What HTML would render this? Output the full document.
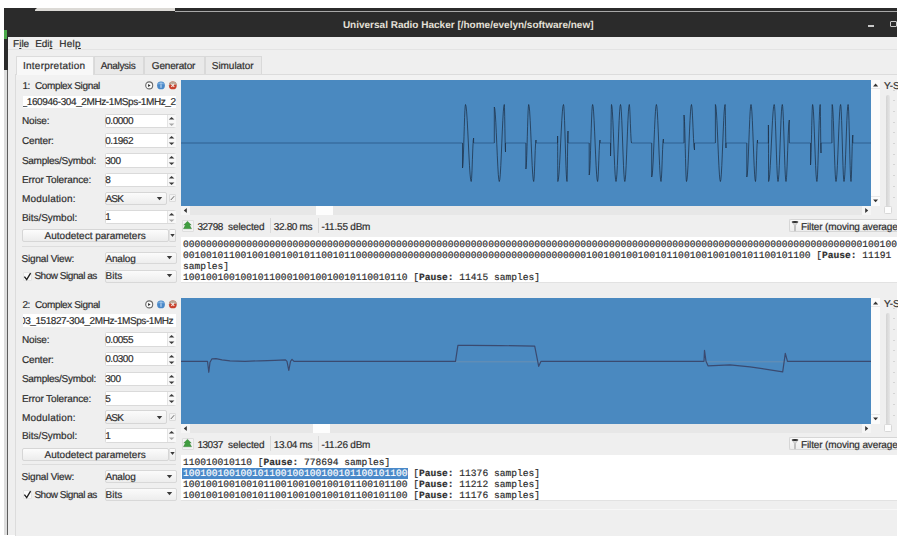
<!DOCTYPE html>
<html><head><meta charset="utf-8"><style>
html,body{margin:0;padding:0;}
body{width:900px;height:538px;overflow:hidden;position:relative;background:#fff;font-family:"Liberation Sans",sans-serif;}
div{position:absolute;}
.t{white-space:nowrap;color:#2e2e2e;line-height:12px;font-size:10px;-webkit-text-stroke:0.2px #2e2e2e;text-rendering:geometricPrecision;}
u{text-decoration:underline;text-underline-offset:1px;text-decoration-thickness:1px;}
svg{overflow:visible}
</style></head><body>
<div style="left:4px;top:8px;width:4px;height:527px;background:#dedede"></div><div style="left:7px;top:8px;width:1px;height:527px;background:#5e5e5e"></div><div style="left:4px;top:8px;width:4px;height:62px;background:#2b2b2b"></div><div style="left:4px;top:8px;width:893px;height:29px;background:#2b2b2b"></div><div style="left:4px;top:30px;width:3px;height:9px;background:#4aa84a"></div><div style="left:35px;top:8px;width:140px;height:3px;background:#dcdad6"></div><svg style="position:absolute;left:30px;top:8px" width="10" height="4" ><path d="M0 0 L7 0 L3 3.5 L0 3.5Z" fill="#2b2b2b"/></svg><div style="left:175px;top:11px;width:722px;height:1px;background:#a8a8a8"></div><div class="t" style="left:342.9px;top:20.2px;color:#e4e0d8;-webkit-text-stroke:0;font-weight:bold;">Universal Radio Hacker [/home/evelyn/software/new]</div><div style="left:868px;top:25px;width:5.5px;height:1.5px;background:#c8c8c8"></div><div style="left:890px;top:20.5px;width:6.5px;height:6.5px;border:1.3px solid #c8c8c8;border-radius:1px;box-sizing:border-box"></div><div style="left:8px;top:37px;width:889px;height:498px;background:#efefef"></div><div style="left:8px;top:49px;width:889px;height:1px;background:#e3e3e3"></div><div class="t" style="left:13.1px;top:39.1px;letter-spacing:-0.033px;">F<u>i</u>le</div><div class="t" style="left:35.2px;top:39.1px;letter-spacing:-0.033px;">Edi<u>t</u></div><div class="t" style="left:59.2px;top:39.1px;letter-spacing:0.267px;">Hel<u>p</u></div><div style="left:15px;top:73.5px;width:882px;height:462px;background:#efefef;border-left:1px solid #dcdcdc;border-top:1px solid #dcdcdc;box-sizing:border-box"></div><div style="left:16px;top:74.5px;width:881px;height:5px;background:#f2f2f2"></div><div style="left:15.5px;top:55.5px;width:78.0px;height:19px;background:#f8f8f8;border:1px solid #dcdcdc;border-bottom:none;box-sizing:border-box"></div><div style="left:93.5px;top:56.2px;width:50.5px;height:17.5px;background:#e9e9e9;border:1px solid #d9d9d9;border-bottom:none;box-sizing:border-box"></div><div style="left:144px;top:56.2px;width:60.5px;height:17.5px;background:#e9e9e9;border:1px solid #d9d9d9;border-bottom:none;box-sizing:border-box"></div><div style="left:204.5px;top:56.2px;width:57.0px;height:17.5px;background:#e9e9e9;border:1px solid #d9d9d9;border-bottom:none;box-sizing:border-box"></div><div class="t" style="left:23.0px;top:60.7px;letter-spacing:0.242px;">Interpretation</div><div class="t" style="left:100.8px;top:60.7px;letter-spacing:-0.343px;">Analysis</div><div class="t" style="left:151.8px;top:60.7px;letter-spacing:-0.175px;">Generator</div><div class="t" style="left:211.8px;top:60.7px;letter-spacing:-0.05px;">Simulator</div><div style="left:257px;top:509px;width:640px;height:1px;background:linear-gradient(90deg,#f1f1f1,#f7f7f7 30%,#f7f7f7)"></div><div class="t" style="left:22.4px;top:81.2px;letter-spacing:-0.353px;">1:&nbsp; Complex Signal</div><svg style="position:absolute;left:144px;top:80px" width="34" height="11" ><circle cx="5.2" cy="5.4" r="3.5" fill="#fafafa" stroke="#6a6a6a" stroke-width="1.1"/><path d="M4.1 3.9 L6.6 5.5 L4.1 7.1Z" fill="#2a2a2a"/><circle cx="17" cy="5.4" r="3.9" fill="#4a88c8"/><path d="M13.6 4.2 A3.9 3.9 0 0 1 20.4 4.2Z" fill="#7fb0e0"/><rect x="16.5" y="4.4" width="1" height="3.4" fill="#cfe2f5"/><rect x="16.5" y="2.8" width="1" height="0.9" fill="#cfe2f5"/><circle cx="28.8" cy="5.4" r="3.9" fill="#c9402c"/><path d="M24.9 5.4 A3.9 3.9 0 0 1 32.7 5.4 L30.6 4.2 L28.8 5.6 L27 4.2Z" fill="#b8a595"/><path d="M27.3 3.9 L30.3 6.9 M30.3 3.9 L27.3 6.9" stroke="#f5e8e2" stroke-width="1.1"/></svg><div style="left:22.5px;top:95.5px;width:153.5px;height:12.5px;background:#fff;box-sizing:border-box;overflow:hidden"><div class="t" style="left:-0.9px;top:1.6px;letter-spacing:-0.4px">_160946-304_2MHz-1MSps-1MHz_2</div></div><div class="t" style="left:21.9px;top:116.2px;letter-spacing:-0.14px;">Noise:</div><div class="t" style="left:21.9px;top:135.9px;letter-spacing:-0.133px;">Center:</div><div class="t" style="left:21.9px;top:155.7px;letter-spacing:-0.25px;">Samples/Symbol:</div><div class="t" style="left:21.9px;top:175.2px;letter-spacing:-0.1px;">Error Tolerance:</div><div class="t" style="left:21.9px;top:194.0px;letter-spacing:0.2px;">Modulation:</div><div class="t" style="left:21.9px;top:212.7px;letter-spacing:-0.027px;">Bits/Symbol:</div><div style="left:104.5px;top:113.5px;width:71.5px;height:14.5px;background:#fff;border:1px solid #dadada;border-radius:1.5px;box-sizing:border-box"></div><div style="left:167px;top:114.5px;width:8.5px;height:12.5px;background:#f8f8f8;border-left:1px solid #e4e4e4;box-sizing:border-box"></div><svg style="position:absolute;left:167px;top:113.5px" width="9" height="15" ><path d="M1.8 5.6 L4.6 3 L7.4 5.6Z" fill="#3a3a3a"/><path d="M1.8 9.4 L4.6 12 L7.4 9.4Z" fill="#a8a8a8"/></svg><div class="t" style="left:105.2px;top:116.2px;letter-spacing:-0.45px;">0.0000</div><div style="left:104.5px;top:133px;width:71.5px;height:14.5px;background:#fff;border:1px solid #dadada;border-radius:1.5px;box-sizing:border-box"></div><div style="left:167px;top:134px;width:8.5px;height:12.5px;background:#f8f8f8;border-left:1px solid #e4e4e4;box-sizing:border-box"></div><svg style="position:absolute;left:167px;top:133px" width="9" height="15" ><path d="M1.8 5.6 L4.6 3 L7.4 5.6Z" fill="#3a3a3a"/><path d="M1.8 9.4 L4.6 12 L7.4 9.4Z" fill="#3a3a3a"/></svg><div class="t" style="left:105.2px;top:135.7px;letter-spacing:-0.45px;">0.1962</div><div style="left:104.5px;top:153px;width:71.5px;height:14.5px;background:#fff;border:1px solid #dadada;border-radius:1.5px;box-sizing:border-box"></div><div style="left:167px;top:154px;width:8.5px;height:12.5px;background:#f8f8f8;border-left:1px solid #e4e4e4;box-sizing:border-box"></div><svg style="position:absolute;left:167px;top:153px" width="9" height="15" ><path d="M1.8 5.6 L4.6 3 L7.4 5.6Z" fill="#3a3a3a"/><path d="M1.8 9.4 L4.6 12 L7.4 9.4Z" fill="#3a3a3a"/></svg><div class="t" style="left:105.2px;top:155.5px;letter-spacing:-0.45px;">300</div><div style="left:104.5px;top:172.5px;width:71.5px;height:14.5px;background:#fff;border:1px solid #dadada;border-radius:1.5px;box-sizing:border-box"></div><div style="left:167px;top:173.5px;width:8.5px;height:12.5px;background:#f8f8f8;border-left:1px solid #e4e4e4;box-sizing:border-box"></div><svg style="position:absolute;left:167px;top:172.5px" width="9" height="15" ><path d="M1.8 5.6 L4.6 3 L7.4 5.6Z" fill="#3a3a3a"/><path d="M1.8 9.4 L4.6 12 L7.4 9.4Z" fill="#3a3a3a"/></svg><div class="t" style="left:105.2px;top:175.0px;letter-spacing:-0.45px;">8</div><div style="left:104.5px;top:209.5px;width:71.5px;height:14.5px;background:#fff;border:1px solid #dadada;border-radius:1.5px;box-sizing:border-box"></div><div style="left:167px;top:210.5px;width:8.5px;height:12.5px;background:#f8f8f8;border-left:1px solid #e4e4e4;box-sizing:border-box"></div><svg style="position:absolute;left:167px;top:209.5px" width="9" height="15" ><path d="M1.8 5.6 L4.6 3 L7.4 5.6Z" fill="#3a3a3a"/><path d="M1.8 9.4 L4.6 12 L7.4 9.4Z" fill="#a8a8a8"/></svg><div class="t" style="left:105.2px;top:212.2px;letter-spacing:-0.45px;">1</div><div style="left:104.5px;top:191.8px;width:62px;height:13.4px;background:linear-gradient(#fbfbfb,#ededed);border:1px solid #d6d6d6;border-radius:2px;box-sizing:border-box"></div><div class="t" style="left:105.4px;top:194.0px;letter-spacing:-0.8px;">ASK</div><svg style="position:absolute;left:156px;top:196.3px" width="7" height="6" ><path d="M0.8 1 L6.2 1 L3.5 4.2Z" fill="#3a3a3a"/></svg><div style="left:169px;top:194px;width:7px;height:8px;background:#f3f3f3;border:1px solid #dcdcdc;border-radius:1px;box-sizing:border-box"></div><svg style="position:absolute;left:169px;top:194px" width="7" height="8" ><path d="M1.8 6 L5.2 2.2" stroke="#6a6a6a" stroke-width="1"/></svg><div style="left:22px;top:229px;width:146.6px;height:13px;background:linear-gradient(#fcfcfc,#ececec);border:1px solid #d6d6d6;border-radius:2px;box-sizing:border-box"></div><div class="t" style="left:44.6px;top:231.2px;">Autodetect parameters</div><div style="left:168.6px;top:229px;width:7.6px;height:13px;background:linear-gradient(#fcfcfc,#ececec);border:1px solid #d6d6d6;border-left-color:#e2e2e2;border-radius:0 1.5px 1.5px 0;box-sizing:border-box"></div><svg style="position:absolute;left:169.2px;top:232.6px" width="7" height="6" ><path d="M1.3 1 L5.7 1 L3.5 4Z" fill="#3a3a3a"/></svg><div style="left:22px;top:245.5px;width:154px;height:1px;background:#dddddd"></div><div class="t" style="left:21.6px;top:253.7px;letter-spacing:-0.2px;">Signal View:</div><div style="left:104.5px;top:251.5px;width:72px;height:12.8px;background:linear-gradient(#fbfbfb,#ededed);border:1px solid #d8d8d8;border-radius:2px;box-sizing:border-box"></div><div class="t" style="left:105.4px;top:253.7px;letter-spacing:-0.16px;">Analog</div><svg style="position:absolute;left:165.8px;top:255.2px" width="7" height="6" ><path d="M0.8 1 L6.2 1 L3.5 4.2Z" fill="#3a3a3a"/></svg><div style="left:22.5px;top:271.5px;width:9px;height:9px;background:#fafafa;border:1px solid #e4e4e4;border-radius:1px;box-sizing:border-box"></div><svg style="position:absolute;left:22.5px;top:271.5px" width="9" height="9" ><path d="M1.4 4.6 L3.7 7.6 L7.6 1.2" stroke="#1e1e1e" stroke-width="1.35" fill="none"/></svg><div class="t" style="left:34.4px;top:271.2px;letter-spacing:-0.462px;">Show Signal as</div><div style="left:104.5px;top:269.5px;width:72px;height:13.1px;background:linear-gradient(#fbfbfb,#ededed);border:1px solid #d8d8d8;border-radius:2px;box-sizing:border-box"></div><div class="t" style="left:105.4px;top:271.2px;letter-spacing:0.1px;">Bits</div><svg style="position:absolute;left:165.8px;top:272.8px" width="7" height="6" ><path d="M0.8 1 L6.2 1 L3.5 4.2Z" fill="#3a3a3a"/></svg><div style="left:181px;top:80px;width:690px;height:125.5px;background:#4a89c0"></div><svg style="position:absolute;left:181px;top:80px" width="690" height="126" viewBox="181 80 690 126"><path d="M181 143 L462.5 143 M473.6 143 L494.3 143 M505.5 143 L525.9 143 M536.0 143 L557.6 143 M568.0 143 L589.2 143 M600.0 143 L610.5 143 M631.5 143 L651.7 143 M663.4 143 L684.0 143 M694.5 143 L715.4 143 M726.0 143 L746.8 143 M757.5 143 L768.4 143 M789.3 143 L810.5 143 M821.0 143 L831.9 143 M852.8 143 L871 143" stroke="#386ea0" stroke-width="1.5" fill="none"/><path d="M462.50 143.00 L462.50 168.00 L462.80 166.45 L463.10 161.94 L463.40 154.91 L463.70 146.06 L464.00 136.25 L464.30 126.44 L464.60 117.59 L464.90 110.56 L465.20 106.05 L465.50 104.50 L466.07 106.38 L466.64 111.85 L467.21 120.37 L467.78 131.10 L468.35 143.00 L468.92 154.90 L469.49 165.63 L470.06 174.15 L470.63 179.62 L471.20 181.50 L471.60 178.59 L472.00 170.62 L472.40 159.75 L472.80 148.88 L473.20 140.91 L473.60 138.00 L473.60 143.00 M494.30 143.00 L494.30 107.00 L494.80 108.82 L495.30 114.11 L495.80 122.35 L496.30 132.74 L496.80 144.25 L497.30 155.76 L497.80 166.15 L498.30 174.39 L498.80 179.68 L499.30 181.50 L499.80 179.62 L500.30 174.15 L500.80 165.63 L501.30 154.90 L501.80 143.00 L502.30 131.10 L502.80 120.37 L503.30 111.85 L503.80 106.38 L504.30 104.50 L504.50 107.68 L504.70 116.38 L504.90 128.25 L505.10 140.12 L505.30 148.82 L505.50 152.00 L505.50 143.00 M525.90 143.00 L525.90 169.00 L526.18 167.42 L526.46 162.84 L526.74 155.71 L527.02 146.72 L527.30 136.75 L527.58 126.78 L527.86 117.79 L528.14 110.66 L528.42 106.08 L528.70 104.50 L529.20 106.38 L529.70 111.85 L530.20 120.37 L530.70 131.10 L531.20 143.00 L531.70 154.90 L532.20 165.63 L532.70 174.15 L533.20 179.62 L533.70 181.50 L534.08 178.72 L534.47 171.12 L534.85 160.75 L535.23 150.38 L535.62 142.78 L536.00 140.00 L536.00 143.00 M557.60 143.00 L557.60 136.00 L557.62 137.11 L557.64 140.34 L557.66 145.38 L557.68 151.72 L557.70 158.75 L557.72 165.78 L557.74 172.12 L557.76 177.16 L557.78 180.39 L557.80 181.50 L558.37 179.62 L558.94 174.15 L559.51 165.63 L560.08 154.90 L560.65 143.00 L561.22 131.10 L561.79 120.37 L562.36 111.85 L562.93 106.38 L563.50 104.50 L563.85 106.38 L564.20 111.85 L564.55 120.37 L564.90 131.10 L565.25 143.00 L565.60 154.90 L565.95 165.63 L566.30 174.15 L566.65 179.62 L567.00 181.50 L567.17 178.12 L567.33 168.88 L567.50 156.25 L567.67 143.62 L567.83 134.38 L568.00 131.00 L568.00 143.00 M589.20 143.00 L589.20 175.00 L589.54 173.27 L589.88 168.27 L590.22 160.47 L590.56 150.64 L590.90 139.75 L591.24 128.86 L591.58 119.03 L591.92 111.23 L592.26 106.23 L592.60 104.50 L593.10 106.38 L593.60 111.85 L594.10 120.37 L594.60 131.10 L595.10 143.00 L595.60 154.90 L596.10 165.63 L596.60 174.15 L597.10 179.62 L597.60 181.50 L598.00 178.72 L598.40 171.12 L598.80 160.75 L599.20 150.38 L599.60 142.78 L600.00 140.00 L600.00 143.00 M610.50 143.00 L610.50 156.00 L610.60 154.74 L610.70 151.08 L610.80 145.39 L610.90 138.21 L611.00 130.25 L611.10 122.29 L611.20 115.11 L611.30 109.42 L611.40 105.76 L611.50 104.50 L611.95 106.38 L612.40 111.85 L612.85 120.37 L613.30 131.10 L613.75 143.00 L614.20 154.90 L614.65 165.63 L615.10 174.15 L615.55 179.62 L616.00 181.50 L616.45 179.62 L616.90 174.15 L617.35 165.63 L617.80 154.90 L618.25 143.00 L618.70 131.10 L619.15 120.37 L619.60 111.85 L620.05 106.38 L620.50 104.50 L620.93 106.38 L621.36 111.85 L621.79 120.37 L622.22 131.10 L622.65 143.00 L623.08 154.90 L623.51 165.63 L623.94 174.15 L624.37 179.62 L624.80 181.50 L625.25 179.62 L625.70 174.15 L626.15 165.63 L626.60 154.90 L627.05 143.00 L627.50 131.10 L627.95 120.37 L628.40 111.85 L628.85 106.38 L629.30 104.50 L629.67 107.08 L630.03 114.12 L630.40 123.75 L630.77 133.38 L631.13 140.42 L631.50 143.00 L631.50 143.00 M651.70 143.00 L651.70 177.00 L652.17 175.23 L652.64 170.08 L653.11 162.06 L653.58 151.95 L654.05 140.75 L654.52 129.55 L654.99 119.44 L655.46 111.42 L655.93 106.27 L656.40 104.50 L656.86 106.38 L657.32 111.85 L657.78 120.37 L658.24 131.10 L658.70 143.00 L659.16 154.90 L659.62 165.63 L660.08 174.15 L660.54 179.62 L661.00 181.50 L661.40 178.65 L661.80 170.88 L662.20 160.25 L662.60 149.62 L663.00 141.85 L663.40 139.00 L663.40 143.00 M684.00 143.00 L684.00 115.00 L684.25 116.63 L684.50 121.35 L684.75 128.71 L685.00 137.98 L685.25 148.25 L685.50 158.52 L685.75 167.79 L686.00 175.15 L686.25 179.87 L686.50 181.50 L687.00 179.62 L687.50 174.15 L688.00 165.63 L688.50 154.90 L689.00 143.00 L689.50 131.10 L690.00 120.37 L690.50 111.85 L691.00 106.38 L691.50 104.50 L692.00 107.55 L692.50 115.88 L693.00 127.25 L693.50 138.62 L694.00 146.95 L694.50 150.00 L694.50 143.00 M715.40 143.00 L715.40 104.50 L715.90 106.38 L716.40 111.85 L716.90 120.37 L717.40 131.10 L717.90 143.00 L718.40 154.90 L718.90 165.63 L719.40 174.15 L719.90 179.62 L720.40 181.50 L720.87 179.62 L721.34 174.15 L721.81 165.63 L722.28 154.90 L722.75 143.00 L723.22 131.10 L723.69 120.37 L724.16 111.85 L724.63 106.38 L725.10 104.50 L725.25 107.41 L725.40 115.38 L725.55 126.25 L725.70 137.12 L725.85 145.09 L726.00 148.00 L726.00 143.00 M746.80 143.00 L746.80 177.00 L747.22 175.23 L747.64 170.08 L748.06 162.06 L748.48 151.95 L748.90 140.75 L749.32 129.55 L749.74 119.44 L750.16 111.42 L750.58 106.27 L751.00 104.50 L751.45 106.38 L751.90 111.85 L752.35 120.37 L752.80 131.10 L753.25 143.00 L753.70 154.90 L754.15 165.63 L754.60 174.15 L755.05 179.62 L755.50 181.50 L755.83 178.72 L756.17 171.12 L756.50 160.75 L756.83 150.38 L757.17 142.78 L757.50 140.00 L757.50 143.00 M768.40 143.00 L768.40 125.00 L768.42 126.38 L768.44 130.40 L768.46 136.65 L768.48 144.52 L768.50 153.25 L768.52 161.98 L768.54 169.85 L768.56 176.10 L768.58 180.12 L768.60 181.50 L769.16 179.62 L769.72 174.15 L770.28 165.63 L770.84 154.90 L771.40 143.00 L771.96 131.10 L772.52 120.37 L773.08 111.85 L773.64 106.38 L774.20 104.50 L774.58 106.38 L774.96 111.85 L775.34 120.37 L775.72 131.10 L776.10 143.00 L776.48 154.90 L776.86 165.63 L777.24 174.15 L777.62 179.62 L778.00 181.50 L778.43 179.62 L778.86 174.15 L779.29 165.63 L779.72 154.90 L780.15 143.00 L780.58 131.10 L781.01 120.37 L781.44 111.85 L781.87 106.38 L782.30 104.50 L782.67 106.38 L783.04 111.85 L783.41 120.37 L783.78 131.10 L784.15 143.00 L784.52 154.90 L784.89 165.63 L785.26 174.15 L785.63 179.62 L786.00 181.50 L786.55 177.38 L787.10 166.12 L787.65 150.75 L788.20 135.38 L788.75 124.12 L789.30 120.00 L789.30 143.00 M810.50 143.00 L810.50 165.00 L810.71 163.52 L810.92 159.22 L811.13 152.53 L811.34 144.10 L811.55 134.75 L811.76 125.40 L811.97 116.97 L812.18 110.28 L812.39 105.98 L812.60 104.50 L813.03 106.38 L813.46 111.85 L813.89 120.37 L814.32 131.10 L814.75 143.00 L815.18 154.90 L815.61 165.63 L816.04 174.15 L816.47 179.62 L816.90 181.50 L817.23 179.62 L817.56 174.15 L817.89 165.63 L818.22 154.90 L818.55 143.00 L818.88 131.10 L819.21 120.37 L819.54 111.85 L819.87 106.38 L820.20 104.50 L820.33 107.75 L820.47 116.62 L820.60 128.75 L820.73 140.88 L820.87 149.75 L821.00 153.00 L821.00 143.00 M831.90 143.00 L831.90 120.00 L831.93 119.62 L831.96 118.52 L831.99 116.81 L832.02 114.64 L832.05 112.25 L832.08 109.86 L832.11 107.69 L832.14 105.98 L832.17 104.88 L832.20 104.50 L832.58 106.38 L832.96 111.85 L833.34 120.37 L833.72 131.10 L834.10 143.00 L834.48 154.90 L834.86 165.63 L835.24 174.15 L835.62 179.62 L836.00 181.50 L836.46 179.62 L836.92 174.15 L837.38 165.63 L837.84 154.90 L838.30 143.00 L838.76 131.10 L839.22 120.37 L839.68 111.85 L840.14 106.38 L840.60 104.50 L840.94 106.38 L841.28 111.85 L841.62 120.37 L841.96 131.10 L842.30 143.00 L842.64 154.90 L842.98 165.63 L843.32 174.15 L843.66 179.62 L844.00 181.50 L844.41 179.62 L844.82 174.15 L845.23 165.63 L845.64 154.90 L846.05 143.00 L846.46 131.10 L846.87 120.37 L847.28 111.85 L847.69 106.38 L848.10 104.50 L848.39 106.38 L848.68 111.85 L848.97 120.37 L849.26 131.10 L849.55 143.00 L849.84 154.90 L850.13 165.63 L850.42 174.15 L850.71 179.62 L851.00 181.50 L851.30 178.39 L851.60 169.88 L851.90 158.25 L852.20 146.62 L852.50 138.11 L852.80 135.00 L852.80 143.00" stroke="#1c2f45" stroke-width="0.75" fill="none" stroke-linejoin="round"/></svg><div style="left:871px;top:80px;width:9px;height:125.5px;background:#fbfbfb"></div><svg style="position:absolute;left:871px;top:80px" width="9" height="126" ><path d="M2 6.4 L4.6 3.6 L7.2 6.4Z" fill="#333"/><path d="M2.1 119.5 L4.6 122.3 L7.1 119.5Z" fill="#333"/></svg><div style="left:871px;top:88.3px;width:9px;height:1px;background:#e8e8e8"></div><div style="left:871px;top:196.3px;width:9px;height:1px;background:#e8e8e8"></div><div style="left:880px;top:76px;width:17.5px;height:16px;overflow:hidden"><div class="t" style="left:4px;top:5px">Y-Scale</div></div><div style="left:885.5px;top:95px;width:4.5px;height:112px;background:linear-gradient(90deg,#d3d3d3,#e6e6e6);border-radius:2px"></div><div style="left:884px;top:205.5px;width:7.5px;height:8.5px;background:#fdfdfd;border:1px solid #d8d8d8;border-radius:1.5px;box-sizing:border-box"></div><div style="left:893px;top:89.5px;width:2px;height:1px;background:#d4d4d4"></div><div style="left:893px;top:100.2px;width:2px;height:1px;background:#d4d4d4"></div><div style="left:893px;top:110.9px;width:2px;height:1px;background:#d4d4d4"></div><div style="left:893px;top:121.6px;width:2px;height:1px;background:#d4d4d4"></div><div style="left:893px;top:132.3px;width:2px;height:1px;background:#d4d4d4"></div><div style="left:893px;top:143.0px;width:2px;height:1px;background:#d4d4d4"></div><div style="left:893px;top:153.7px;width:2px;height:1px;background:#d4d4d4"></div><div style="left:893px;top:164.4px;width:2px;height:1px;background:#d4d4d4"></div><div style="left:893px;top:175.1px;width:2px;height:1px;background:#d4d4d4"></div><div style="left:893px;top:185.8px;width:2px;height:1px;background:#d4d4d4"></div><div style="left:893px;top:196.5px;width:2px;height:1px;background:#d4d4d4"></div><div style="left:181px;top:205.5px;width:690px;height:9px;background:#e7e7e7"></div><div style="left:181px;top:205.5px;width:9px;height:9px;background:#f5f5f5"></div><div style="left:862px;top:205.5px;width:9px;height:9px;background:#f5f5f5"></div><div style="left:315.5px;top:206px;width:17px;height:8.5px;background:#fdfdfd"></div><svg style="position:absolute;left:181px;top:205.5px" width="690" height="9" ><path d="M5.8 2 L2.8 4.5 L5.8 7Z" fill="#333"/><path d="M684.2 2 L687.2 4.5 L684.2 7Z" fill="#333"/></svg><div style="left:181.5px;top:219.5px;width:12px;height:12.5px;background:#f3f3f3;border:1px solid #dedede;border-radius:1px;box-sizing:border-box"></div><svg style="position:absolute;left:182px;top:220px" width="11" height="11" ><path d="M5.5 1.3 L9.3 5 L7.6 5 L9.6 8.8 L1.4 8.8 L3.4 5 L1.7 5Z" fill="#3f9d3f" stroke="#2e6e2e" stroke-width="0.3"/></svg><div class="t" style="left:197.4px;top:221.7px;letter-spacing:-0.45px;">32798</div><div class="t" style="left:228.0px;top:221.7px;letter-spacing:-0.086px;">selected</div><div style="left:269.5px;top:218px;width:1px;height:15px;background:#dadada"></div><div class="t" style="left:273.8px;top:221.7px;letter-spacing:-0.357px;">32.80 ms</div><div style="left:317.5px;top:218px;width:1px;height:15px;background:#dadada"></div><div class="t" style="left:321.4px;top:221.7px;letter-spacing:-0.211px;">-11.55 dBm</div><div style="left:788.6px;top:214px;width:108.4px;height:22px;overflow:hidden"><div style="left:0;top:5.2px;width:108.4px;height:13.2px;background:linear-gradient(#fbfbfb,#ededed);border:1px solid #d6d6d6;border-right:none;border-radius:2px 0 0 2px;box-sizing:border-box"></div><div class="t" style="left:12.4px;top:7.7px;letter-spacing:-0.129px">Filter (moving average)</div></div><svg style="position:absolute;left:790px;top:220px" width="10" height="12" ><path d="M1.8 1.8 L8.2 1.8 L5.6 5.2 L5.4 10.8 L4.6 10.8 L4.4 5.2Z" fill="#d8d8d8" stroke="#9a9a9a" stroke-width="0.5"/><ellipse cx="5" cy="2" rx="3.2" ry="0.9" fill="#2a2a2a"/></svg><div style="left:181px;top:237px;width:716px;height:45px;background:#fff;overflow:hidden"><div style="font-family:'Liberation Mono',monospace;font-size:9.6px;line-height:11px;white-space:pre;position:absolute;left:2px;color:#2e2e2e;-webkit-text-stroke:0.18px #2e2e2e;text-rendering:geometricPrecision;top:1.5px">00000000000000000000000000000000000000000000000000000000000000000000000000000000000000000000000000000000000000000000001001001001001001011001</div><div style="font-family:'Liberation Mono',monospace;font-size:9.6px;line-height:11px;white-space:pre;position:absolute;left:2px;color:#2e2e2e;-webkit-text-stroke:0.18px #2e2e2e;text-rendering:geometricPrecision;top:12.5px">0010010110010010010010110010110000000000000000000000000000000000000000100100100100101100100100100101100101100 [<b>Pause:</b> 11191</div><div style="font-family:'Liberation Mono',monospace;font-size:9.6px;line-height:11px;white-space:pre;position:absolute;left:2px;color:#2e2e2e;-webkit-text-stroke:0.18px #2e2e2e;text-rendering:geometricPrecision;top:23.5px">samples]</div><div style="font-family:'Liberation Mono',monospace;font-size:9.6px;line-height:11px;white-space:pre;position:absolute;left:2px;color:#2e2e2e;-webkit-text-stroke:0.18px #2e2e2e;text-rendering:geometricPrecision;top:34.5px">100100100100101100010010010010110010110 [<b>Pause:</b> 11415 samples]</div></div><div style="left:181px;top:282px;width:716px;height:1px;background:#e2e2e2"></div><div class="t" style="left:22.4px;top:299.8px;letter-spacing:-0.353px;">2:&nbsp; Complex Signal</div><svg style="position:absolute;left:144px;top:298.6px" width="34" height="11" ><circle cx="5.2" cy="5.4" r="3.5" fill="#fafafa" stroke="#6a6a6a" stroke-width="1.1"/><path d="M4.1 3.9 L6.6 5.5 L4.1 7.1Z" fill="#2a2a2a"/><circle cx="17" cy="5.4" r="3.9" fill="#4a88c8"/><path d="M13.6 4.2 A3.9 3.9 0 0 1 20.4 4.2Z" fill="#7fb0e0"/><rect x="16.5" y="4.4" width="1" height="3.4" fill="#cfe2f5"/><rect x="16.5" y="2.8" width="1" height="0.9" fill="#cfe2f5"/><circle cx="28.8" cy="5.4" r="3.9" fill="#c9402c"/><path d="M24.9 5.4 A3.9 3.9 0 0 1 32.7 5.4 L30.6 4.2 L28.8 5.6 L27 4.2Z" fill="#b8a595"/><path d="M27.3 3.9 L30.3 6.9 M30.3 3.9 L27.3 6.9" stroke="#f5e8e2" stroke-width="1.1"/></svg><div style="left:22.5px;top:314.1px;width:153.5px;height:12.5px;background:#fff;box-sizing:border-box;overflow:hidden"><div class="t" style="left:-2.5px;top:1.6px;letter-spacing:-0.43px">03_151827-304_2MHz-1MSps-1MHz</div></div><div class="t" style="left:21.9px;top:334.8px;letter-spacing:-0.14px;">Noise:</div><div class="t" style="left:21.9px;top:354.5px;letter-spacing:-0.133px;">Center:</div><div class="t" style="left:21.9px;top:374.3px;letter-spacing:-0.25px;">Samples/Symbol:</div><div class="t" style="left:21.9px;top:393.8px;letter-spacing:-0.1px;">Error Tolerance:</div><div class="t" style="left:21.9px;top:412.6px;letter-spacing:0.2px;">Modulation:</div><div class="t" style="left:21.9px;top:431.3px;letter-spacing:-0.027px;">Bits/Symbol:</div><div style="left:104.5px;top:332.1px;width:71.5px;height:14.5px;background:#fff;border:1px solid #dadada;border-radius:1.5px;box-sizing:border-box"></div><div style="left:167px;top:333.1px;width:8.5px;height:12.5px;background:#f8f8f8;border-left:1px solid #e4e4e4;box-sizing:border-box"></div><svg style="position:absolute;left:167px;top:332.1px" width="9" height="15" ><path d="M1.8 5.6 L4.6 3 L7.4 5.6Z" fill="#3a3a3a"/><path d="M1.8 9.4 L4.6 12 L7.4 9.4Z" fill="#3a3a3a"/></svg><div class="t" style="left:105.2px;top:334.8px;letter-spacing:-0.45px;">0.0055</div><div style="left:104.5px;top:351.6px;width:71.5px;height:14.5px;background:#fff;border:1px solid #dadada;border-radius:1.5px;box-sizing:border-box"></div><div style="left:167px;top:352.6px;width:8.5px;height:12.5px;background:#f8f8f8;border-left:1px solid #e4e4e4;box-sizing:border-box"></div><svg style="position:absolute;left:167px;top:351.6px" width="9" height="15" ><path d="M1.8 5.6 L4.6 3 L7.4 5.6Z" fill="#3a3a3a"/><path d="M1.8 9.4 L4.6 12 L7.4 9.4Z" fill="#3a3a3a"/></svg><div class="t" style="left:105.2px;top:354.3px;letter-spacing:-0.45px;">0.0300</div><div style="left:104.5px;top:371.6px;width:71.5px;height:14.5px;background:#fff;border:1px solid #dadada;border-radius:1.5px;box-sizing:border-box"></div><div style="left:167px;top:372.6px;width:8.5px;height:12.5px;background:#f8f8f8;border-left:1px solid #e4e4e4;box-sizing:border-box"></div><svg style="position:absolute;left:167px;top:371.6px" width="9" height="15" ><path d="M1.8 5.6 L4.6 3 L7.4 5.6Z" fill="#3a3a3a"/><path d="M1.8 9.4 L4.6 12 L7.4 9.4Z" fill="#3a3a3a"/></svg><div class="t" style="left:105.2px;top:374.1px;letter-spacing:-0.45px;">300</div><div style="left:104.5px;top:391.1px;width:71.5px;height:14.5px;background:#fff;border:1px solid #dadada;border-radius:1.5px;box-sizing:border-box"></div><div style="left:167px;top:392.1px;width:8.5px;height:12.5px;background:#f8f8f8;border-left:1px solid #e4e4e4;box-sizing:border-box"></div><svg style="position:absolute;left:167px;top:391.1px" width="9" height="15" ><path d="M1.8 5.6 L4.6 3 L7.4 5.6Z" fill="#3a3a3a"/><path d="M1.8 9.4 L4.6 12 L7.4 9.4Z" fill="#3a3a3a"/></svg><div class="t" style="left:105.2px;top:393.6px;letter-spacing:-0.45px;">5</div><div style="left:104.5px;top:428.1px;width:71.5px;height:14.5px;background:#fff;border:1px solid #dadada;border-radius:1.5px;box-sizing:border-box"></div><div style="left:167px;top:429.1px;width:8.5px;height:12.5px;background:#f8f8f8;border-left:1px solid #e4e4e4;box-sizing:border-box"></div><svg style="position:absolute;left:167px;top:428.1px" width="9" height="15" ><path d="M1.8 5.6 L4.6 3 L7.4 5.6Z" fill="#3a3a3a"/><path d="M1.8 9.4 L4.6 12 L7.4 9.4Z" fill="#a8a8a8"/></svg><div class="t" style="left:105.2px;top:430.8px;letter-spacing:-0.45px;">1</div><div style="left:104.5px;top:410.4px;width:62px;height:13.4px;background:linear-gradient(#fbfbfb,#ededed);border:1px solid #d6d6d6;border-radius:2px;box-sizing:border-box"></div><div class="t" style="left:105.4px;top:412.6px;letter-spacing:-0.8px;">ASK</div><svg style="position:absolute;left:156px;top:414.9px" width="7" height="6" ><path d="M0.8 1 L6.2 1 L3.5 4.2Z" fill="#3a3a3a"/></svg><div style="left:169px;top:412.6px;width:7px;height:8px;background:#f3f3f3;border:1px solid #dcdcdc;border-radius:1px;box-sizing:border-box"></div><svg style="position:absolute;left:169px;top:412.6px" width="7" height="8" ><path d="M1.8 6 L5.2 2.2" stroke="#6a6a6a" stroke-width="1"/></svg><div style="left:22px;top:447.6px;width:146.6px;height:13px;background:linear-gradient(#fcfcfc,#ececec);border:1px solid #d6d6d6;border-radius:2px;box-sizing:border-box"></div><div class="t" style="left:44.6px;top:449.8px;">Autodetect parameters</div><div style="left:168.6px;top:447.6px;width:7.6px;height:13px;background:linear-gradient(#fcfcfc,#ececec);border:1px solid #d6d6d6;border-left-color:#e2e2e2;border-radius:0 1.5px 1.5px 0;box-sizing:border-box"></div><svg style="position:absolute;left:169.2px;top:451.2px" width="7" height="6" ><path d="M1.3 1 L5.7 1 L3.5 4Z" fill="#3a3a3a"/></svg><div style="left:22px;top:464.1px;width:154px;height:1px;background:#dddddd"></div><div class="t" style="left:21.6px;top:472.3px;letter-spacing:-0.2px;">Signal View:</div><div style="left:104.5px;top:470.1px;width:72px;height:12.8px;background:linear-gradient(#fbfbfb,#ededed);border:1px solid #d8d8d8;border-radius:2px;box-sizing:border-box"></div><div class="t" style="left:105.4px;top:472.3px;letter-spacing:-0.16px;">Analog</div><svg style="position:absolute;left:165.8px;top:473.79999999999995px" width="7" height="6" ><path d="M0.8 1 L6.2 1 L3.5 4.2Z" fill="#3a3a3a"/></svg><div style="left:22.5px;top:490.1px;width:9px;height:9px;background:#fafafa;border:1px solid #e4e4e4;border-radius:1px;box-sizing:border-box"></div><svg style="position:absolute;left:22.5px;top:490.1px" width="9" height="9" ><path d="M1.4 4.6 L3.7 7.6 L7.6 1.2" stroke="#1e1e1e" stroke-width="1.35" fill="none"/></svg><div class="t" style="left:34.4px;top:489.8px;letter-spacing:-0.462px;">Show Signal as</div><div style="left:104.5px;top:488.1px;width:72px;height:13.1px;background:linear-gradient(#fbfbfb,#ededed);border:1px solid #d8d8d8;border-radius:2px;box-sizing:border-box"></div><div class="t" style="left:105.4px;top:489.8px;letter-spacing:0.1px;">Bits</div><svg style="position:absolute;left:165.8px;top:491.4px" width="7" height="6" ><path d="M0.8 1 L6.2 1 L3.5 4.2Z" fill="#3a3a3a"/></svg><div style="left:181px;top:298px;width:690px;height:125.5px;background:#4a89c0"></div><svg style="position:absolute;left:181px;top:298px" width="690" height="126" viewBox="181 298 690 126"><g transform="translate(0 0.3)"><path d="M455 361.5 L541 361.5 M704 361.5 L786 361.5" stroke="#6a8fb3" stroke-width="1" fill="none"/><path d="M181 361 L207.5 361 L208.8 372 L210 362 L212 358.5 L216 358.3 L222 359.5 L230 360.6 L245 361 L260 360.5 L275 360 L285.5 359.5 L287 361 L288.8 370 L290.5 361 L292 359 L294 361 L455.5 361 L457.9 345 L470 345 L500 345.3 L534.7 345.8 L538.7 366 L541 361 L704 361 L704.5 350 L706 361 L708 365.5 L730 364.6 L750 366.5 L782.7 371.5 L785.3 353 L787.5 361 L790 361 L871 361" stroke="#3a4a70" stroke-width="1.2" fill="none" stroke-linejoin="round"/></g></svg><div style="left:871px;top:298px;width:9px;height:125.5px;background:#fbfbfb"></div><svg style="position:absolute;left:871px;top:298px" width="9" height="126" ><path d="M2 6.4 L4.6 3.6 L7.2 6.4Z" fill="#333"/><path d="M2.1 119.5 L4.6 122.3 L7.1 119.5Z" fill="#333"/></svg><div style="left:871px;top:306.3px;width:9px;height:1px;background:#e8e8e8"></div><div style="left:871px;top:414.3px;width:9px;height:1px;background:#e8e8e8"></div><div style="left:880px;top:294px;width:17.5px;height:16px;overflow:hidden"><div class="t" style="left:4px;top:5px">Y-Scale</div></div><div style="left:885.5px;top:313px;width:4.5px;height:112px;background:linear-gradient(90deg,#d3d3d3,#e6e6e6);border-radius:2px"></div><div style="left:884px;top:423.5px;width:7.5px;height:8.5px;background:#fdfdfd;border:1px solid #d8d8d8;border-radius:1.5px;box-sizing:border-box"></div><div style="left:893px;top:307.5px;width:2px;height:1px;background:#d4d4d4"></div><div style="left:893px;top:318.2px;width:2px;height:1px;background:#d4d4d4"></div><div style="left:893px;top:328.9px;width:2px;height:1px;background:#d4d4d4"></div><div style="left:893px;top:339.6px;width:2px;height:1px;background:#d4d4d4"></div><div style="left:893px;top:350.3px;width:2px;height:1px;background:#d4d4d4"></div><div style="left:893px;top:361.0px;width:2px;height:1px;background:#d4d4d4"></div><div style="left:893px;top:371.7px;width:2px;height:1px;background:#d4d4d4"></div><div style="left:893px;top:382.4px;width:2px;height:1px;background:#d4d4d4"></div><div style="left:893px;top:393.1px;width:2px;height:1px;background:#d4d4d4"></div><div style="left:893px;top:403.8px;width:2px;height:1px;background:#d4d4d4"></div><div style="left:893px;top:414.5px;width:2px;height:1px;background:#d4d4d4"></div><div style="left:181px;top:423.5px;width:690px;height:9px;background:#e7e7e7"></div><div style="left:181px;top:423.5px;width:9px;height:9px;background:#f5f5f5"></div><div style="left:862px;top:423.5px;width:9px;height:9px;background:#f5f5f5"></div><div style="left:312.5px;top:424px;width:17px;height:8.5px;background:#fdfdfd"></div><svg style="position:absolute;left:181px;top:423.5px" width="690" height="9" ><path d="M5.8 2 L2.8 4.5 L5.8 7Z" fill="#333"/><path d="M684.2 2 L687.2 4.5 L684.2 7Z" fill="#333"/></svg><div style="left:181.5px;top:437.5px;width:12px;height:12.5px;background:#f3f3f3;border:1px solid #dedede;border-radius:1px;box-sizing:border-box"></div><svg style="position:absolute;left:182px;top:438px" width="11" height="11" ><path d="M5.5 1.3 L9.3 5 L7.6 5 L9.6 8.8 L1.4 8.8 L3.4 5 L1.7 5Z" fill="#3f9d3f" stroke="#2e6e2e" stroke-width="0.3"/></svg><div class="t" style="left:197.4px;top:439.7px;letter-spacing:-0.45px;">13037</div><div class="t" style="left:228.0px;top:439.7px;letter-spacing:-0.086px;">selected</div><div style="left:269.5px;top:436px;width:1px;height:15px;background:#dadada"></div><div class="t" style="left:273.8px;top:439.7px;letter-spacing:-0.357px;">13.04 ms</div><div style="left:317.5px;top:436px;width:1px;height:15px;background:#dadada"></div><div class="t" style="left:321.4px;top:439.7px;letter-spacing:-0.211px;">-11.26 dBm</div><div style="left:788.6px;top:432px;width:108.4px;height:22px;overflow:hidden"><div style="left:0;top:5.2px;width:108.4px;height:13.2px;background:linear-gradient(#fbfbfb,#ededed);border:1px solid #d6d6d6;border-right:none;border-radius:2px 0 0 2px;box-sizing:border-box"></div><div class="t" style="left:12.4px;top:7.7px;letter-spacing:-0.129px">Filter (moving average)</div></div><svg style="position:absolute;left:790px;top:438px" width="10" height="12" ><path d="M1.8 1.8 L8.2 1.8 L5.6 5.2 L5.4 10.8 L4.6 10.8 L4.4 5.2Z" fill="#d8d8d8" stroke="#9a9a9a" stroke-width="0.5"/><ellipse cx="5" cy="2" rx="3.2" ry="0.9" fill="#2a2a2a"/></svg><div style="left:181px;top:455px;width:716px;height:45px;background:#fff;overflow:hidden"><div style="font-family:'Liberation Mono',monospace;font-size:9.6px;line-height:11px;white-space:pre;position:absolute;left:2px;color:#2e2e2e;-webkit-text-stroke:0.18px #2e2e2e;text-rendering:geometricPrecision;top:1.5px">110010010110 [<b>Pause:</b> 778694 samples]</div><div style="font-family:'Liberation Mono',monospace;font-size:9.6px;line-height:11px;white-space:pre;position:absolute;left:2px;color:#2e2e2e;-webkit-text-stroke:0.18px #2e2e2e;text-rendering:geometricPrecision;top:12.5px"><span style="background:#4a89c9;color:#fff;margin-left:-1px;padding-left:1px;-webkit-text-stroke:0.15px #fff">100100100100101100100100100101100101100</span> [<b>Pause:</b> 11376 samples]</div><div style="font-family:'Liberation Mono',monospace;font-size:9.6px;line-height:11px;white-space:pre;position:absolute;left:2px;color:#2e2e2e;-webkit-text-stroke:0.18px #2e2e2e;text-rendering:geometricPrecision;top:23.5px">100100100100101100100100100101100101100 [<b>Pause:</b> 11212 samples]</div><div style="font-family:'Liberation Mono',monospace;font-size:9.6px;line-height:11px;white-space:pre;position:absolute;left:2px;color:#2e2e2e;-webkit-text-stroke:0.18px #2e2e2e;text-rendering:geometricPrecision;top:34.5px">100100100100101100100100100101100101100 [<b>Pause:</b> 11176 samples]</div></div><div style="left:181px;top:500px;width:716px;height:1px;background:#e2e2e2"></div>
</body></html>
